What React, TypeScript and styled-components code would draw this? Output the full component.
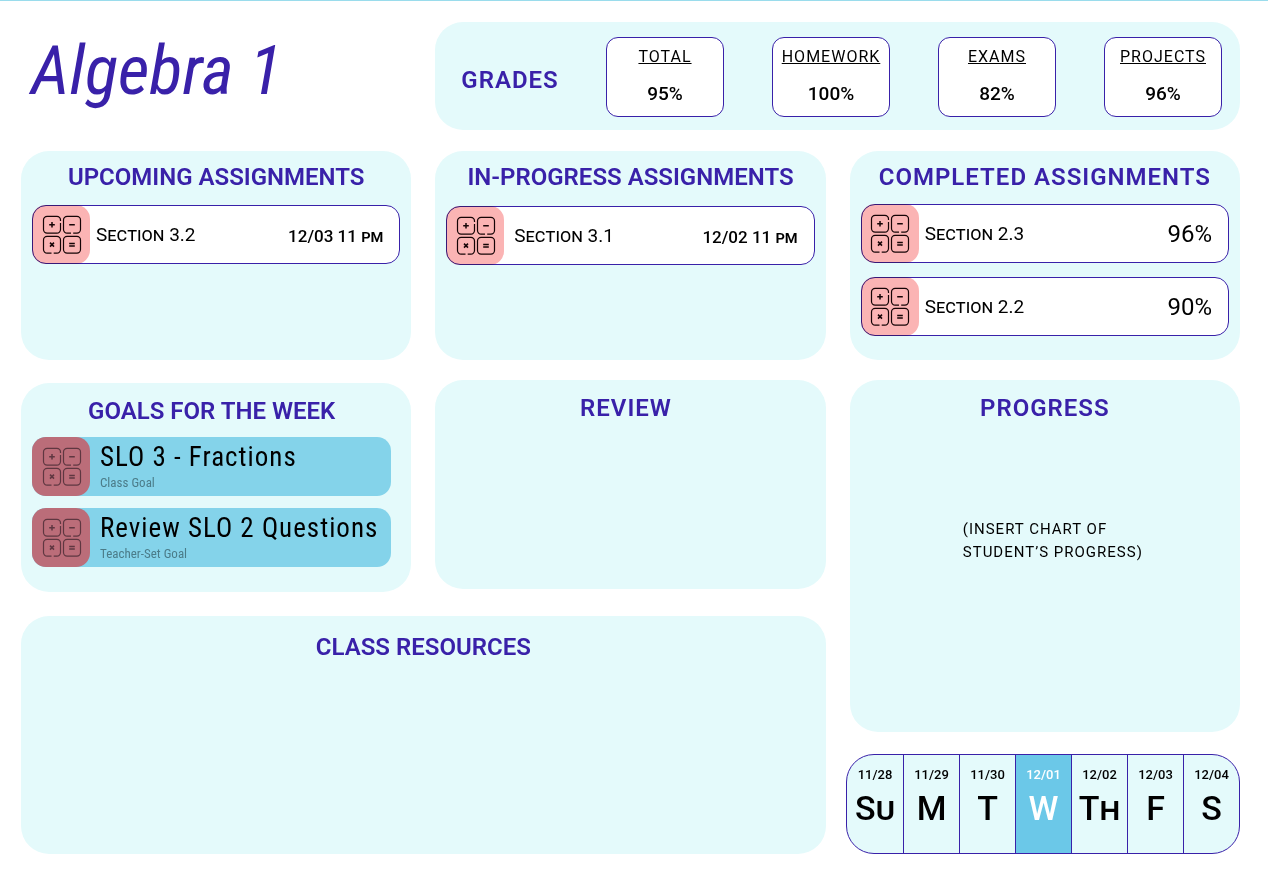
import React from "react";
import styled, { createGlobalStyle } from "styled-components";

const INDIGO = "#3921a9";
const MIST = "#e4fafb";
const SANS = `Roboto, "Liberation Sans", sans-serif`;
const CONDENSED = `"Roboto Condensed", Roboto, "Liberation Sans", sans-serif`;

const GlobalStyle = createGlobalStyle`
  *, *::before, *::after { box-sizing: border-box; }
  body { margin: 0; background: #fff; color: #000; font-family: ${SANS}; }
  h1, h2, p, ul, ol, dl, dt, dd { margin: 0; padding: 0; }
  ul, ol { list-style: none; }
`;

const Page = styled.div`
  border-top: 1px solid #9adcec;
  padding: 21px 28px 22px 21px;
  display: flex;
  flex-direction: column;
  gap: 21px;
`;

const Columns = styled.div`
  display: grid;
  grid-template-columns: repeat(3, minmax(0, 1fr));
  column-gap: 24px;
`;

const Title = styled.h1`
  align-self: center;
  padding: 0 0 10px 10px;
  font: italic 400 69px/80px ${CONDENSED};
  white-space: nowrap;
  color: ${INDIGO};
`;

const GradesPanel = styled.section`
  grid-column: span 2;
  min-height: 108px;
  padding: 15px 18px 13px 26px;
  border-radius: 28px;
  background: ${MIST};
  display: flex;
  align-items: center;
  justify-content: space-between;
`;

const Heading = styled.h2<{ $wide?: boolean }>`
  font-size: 24px;
  line-height: 28px;
  font-weight: 600;
  letter-spacing: ${(p) => (p.$wide ? "1px" : "0")};
  text-align: center;
  white-space: nowrap;
  color: ${INDIGO};
`;

const GradesHeading = styled(Heading)`
  padding-top: 6px;
`;

const GradeList = styled.dl`
  display: flex;
  gap: 48px;
`;

const GradeBox = styled.div`
  width: 118px;
  height: 80px;
  padding-top: 9px;
  border: 1px solid ${INDIGO};
  border-radius: 12px;
  background: #fff;
  display: flex;
  flex-direction: column;
  align-items: center;
  gap: 15px;
`;

const GradeName = styled.dt`
  font-size: 16px;
  line-height: 20px;
  letter-spacing: 1px;
  text-decoration: underline;
`;

const GradeValue = styled.dd`
  font-size: 19px;
  line-height: 24px;
  font-weight: 500;
`;

const LeftArea = styled.div`
  grid-column: span 2;
  display: flex;
  flex-direction: column;
  gap: 24px;
`;

const Pair = styled.div`
  display: grid;
  grid-template-columns: repeat(2, minmax(0, 1fr));
  column-gap: 24px;
  align-items: start;
`;

const Stack = styled.div<{ $gap: number }>`
  display: flex;
  flex-direction: column;
  gap: ${(p) => p.$gap}px;
`;

const Card = styled.section<{ $top?: number; $right?: number; $height?: number }>`
  min-height: ${(p) => p.$height ?? 209}px;
  padding: ${(p) => p.$top ?? 12}px ${(p) => p.$right ?? 11}px 12px 11px;
  border-radius: 28px;
  background: ${MIST};
`;

const Rows = styled.ul<{ $top: number; $gap: number }>`
  padding-top: ${(p) => p.$top}px;
  display: flex;
  flex-direction: column;
  gap: ${(p) => p.$gap}px;
`;

const AssignmentRow = styled.li`
  height: 59px;
  padding-right: 16px;
  border: 1px solid ${INDIGO};
  border-radius: 14px;
  background: #fff;
  display: flex;
  align-items: center;
`;

const Tile = styled.span<{ $muted?: boolean }>`
  flex: none;
  width: 58px;
  height: 59px;
  padding-left: 1px;
  margin: ${(p) => (p.$muted ? "0" : "-1px 0 -1px -1px")};
  border-radius: 14px;
  background: ${(p) => (p.$muted ? "#bb6d79" : "#fbb4b4")};
  mix-blend-mode: ${(p) => (p.$muted ? "normal" : "multiply")};
  color: ${(p) => (p.$muted ? "#5f3741" : "#160406")};
  display: grid;
  place-items: center;
`;

const Name = styled.span<{ $indent: number }>`
  flex: 1;
  padding-left: ${(p) => p.$indent}px;
  font-size: 19px;
  line-height: 24px;
  font-variant: small-caps;
`;

const Due = styled.time`
  padding-top: 2px;
  font-size: 17px;
  line-height: 24px;
  font-weight: 500;
  font-variant: small-caps;
`;

const Score = styled.span`
  font-size: 24px;
  line-height: 28px;
`;

const GoalRow = styled.li`
  height: 59px;
  border-radius: 14px;
  background: #84d3ea;
  display: flex;
  gap: 10px;
`;

const GoalText = styled.div`
  padding-top: 4px;
  font-family: ${CONDENSED};
  white-space: nowrap;
`;

const GoalName = styled.p`
  font-size: 27px;
  line-height: 32px;
  letter-spacing: 1px;
`;

const GoalKind = styled.p`
  font-size: 13px;
  line-height: 20px;
  color: #4b7c89;
`;

const ChartNote = styled.p`
  width: max-content;
  margin: 96px auto 0;
  padding-left: 16px;
  font-size: 15px;
  line-height: 23px;
  letter-spacing: 1px;
  white-space: nowrap;
`;

const Week = styled.ol`
  align-self: flex-end;
  min-width: 100%;
  height: 100px;
  border: 1px solid ${INDIGO};
  border-radius: 28px;
  background: ${MIST};
  overflow: hidden;
  display: grid;
  grid-template-columns: repeat(7, minmax(56px, 1fr));
`;

const Day = styled.li<{ $today?: boolean }>`
  padding-top: 10px;
  text-align: center;
  font-weight: 500;
  color: ${(p) => (p.$today ? "#fff" : "#000")};
  background: ${(p) => (p.$today ? "#6bc8e8" : "transparent")};
  &:not(:first-child) { border-left: 1px solid ${INDIGO}; }
`;

const DayDate = styled.time`
  display: block;
  font-size: 13px;
  line-height: 20px;
`;

const DayName = styled.span`
  display: block;
  font-size: 34px;
  line-height: 46px;
  font-variant: small-caps;
`;

function MathIcon() {
  return (
    <svg width="40" height="40" viewBox="0 0 40 40" fill="none" stroke="currentColor" strokeWidth="1.2" aria-hidden="true">
      <path d="M18.5 8V14.6a3.6 3.6 0 0 1-3.6 3.6H5.1a3.6 3.6 0 0 1-3.6-3.6V4.9a3.6 3.6 0 0 1 3.6-3.6h9.8a3.6 3.6 0 0 1 3.6 3.6v1" />
      <path d="M29 18.2H25.1a3.6 3.6 0 0 1-3.6-3.6V4.9a3.6 3.6 0 0 1 3.6-3.6h9.8a3.6 3.6 0 0 1 3.6 3.6v9.7a3.6 3.6 0 0 1-3.6 3.6H31.2" />
      <path d="M9.5 38.2H5.1a3.6 3.6 0 0 1-3.6-3.6V24.9a3.6 3.6 0 0 1 3.6-3.6h9.8a3.6 3.6 0 0 1 3.6 3.6v9.7a3.6 3.6 0 0 1-3.6 3.6H11.7" />
      <rect x="21.5" y="21.3" width="17" height="16.9" rx="3.6" />
      <path strokeWidth="1.5" d="M10 7v5.6M7.2 9.8h5.6M27.2 9.8h5.6M8 27.6l4 4M12 27.6l-4 4M27.2 28.4h5.6M27.2 31h5.6" />
    </svg>
  );
}

type Assignment = { name: string; due?: string; score?: string };

type AssignmentsProps = {
  title: string;
  items: Assignment[];
  wide?: boolean;
  top?: number;
  indent?: number;
};

function Assignments({ title, items, wide, top = 14, indent = 6 }: AssignmentsProps) {
  return (
    <Card>
      <Heading $wide={wide}>{title}</Heading>
      <Rows $top={top} $gap={14}>
        {items.map((item) => (
          <AssignmentRow key={item.name}>
            <Tile><MathIcon /></Tile>
            <Name $indent={indent}>{item.name}</Name>
            {item.due && <Due>{item.due}</Due>}
            {item.score && <Score>{item.score}</Score>}
          </AssignmentRow>
        ))}
      </Rows>
    </Card>
  );
}

const grades = [
  ["TOTAL", "95%"],
  ["HOMEWORK", "100%"],
  ["EXAMS", "82%"],
  ["PROJECTS", "96%"],
];

const goals = [
  ["SLO 3 - Fractions", "Class Goal"],
  ["Review SLO 2 Questions", "Teacher-Set Goal"],
];

const week = [
  ["11/28", "Su"],
  ["11/29", "M"],
  ["11/30", "T"],
  ["12/01", "W"],
  ["12/02", "Th"],
  ["12/03", "F"],
  ["12/04", "S"],
];
const today = "12/01";

export default function App() {
  return (
    <>
      <GlobalStyle />
      <Page>
        <Columns as="header">
          <Title>Algebra 1</Title>
          <GradesPanel>
            <GradesHeading $wide>GRADES</GradesHeading>
            <GradeList>
              {grades.map(([name, value]) => (
                <GradeBox key={name}>
                  <GradeName>{name}</GradeName>
                  <GradeValue>{value}</GradeValue>
                </GradeBox>
              ))}
            </GradeList>
          </GradesPanel>
        </Columns>
        <Columns as="main">
          <LeftArea>
            <Pair>
              <Stack $gap={23}>
                <Assignments title="UPCOMING ASSIGNMENTS" items={[{ name: "Section 3.2", due: "12/03 11 pm" }]} />
                <Card $top={14} $right={20}>
                  <Heading>GOALS FOR THE WEEK</Heading>
                  <Rows $top={12} $gap={12}>
                    {goals.map(([name, kind]) => (
                      <GoalRow key={name}>
                        <Tile $muted><MathIcon /></Tile>
                        <GoalText>
                          <GoalName>{name}</GoalName>
                          <GoalKind>{kind}</GoalKind>
                        </GoalText>
                      </GoalRow>
                    ))}
                  </Rows>
                </Card>
              </Stack>
              <Stack $gap={20}>
                <Assignments
                  title="IN-PROGRESS ASSIGNMENTS"
                  top={15}
                  indent={10}
                  items={[{ name: "Section 3.1", due: "12/02 11 pm" }]}
                />
                <Card $top={14} $right={20}>
                  <Heading $wide>REVIEW</Heading>
                </Card>
              </Stack>
            </Pair>
            <Card $top={17} $height={238}>
              <Heading>CLASS RESOURCES</Heading>
            </Card>
          </LeftArea>
          <Stack $gap={22}>
            <Stack $gap={20}>
              <Assignments
                wide
                top={13}
                title="COMPLETED ASSIGNMENTS"
                items={[
                  { name: "Section 2.3", score: "96%" },
                  { name: "Section 2.2", score: "90%" },
                ]}
              />
              <Card $top={14} $height={352}>
                <Heading $wide>PROGRESS</Heading>
                <ChartNote>
                  (INSERT CHART OF
                  <br />
                  STUDENT’S PROGRESS)
                </ChartNote>
              </Card>
            </Stack>
            <Week>
              {week.map(([date, name]) => (
                <Day key={date} $today={date === today}>
                  <DayDate>{date}</DayDate>
                  <DayName>{name}</DayName>
                </Day>
              ))}
            </Week>
          </Stack>
        </Columns>
      </Page>
    </>
  );
}
